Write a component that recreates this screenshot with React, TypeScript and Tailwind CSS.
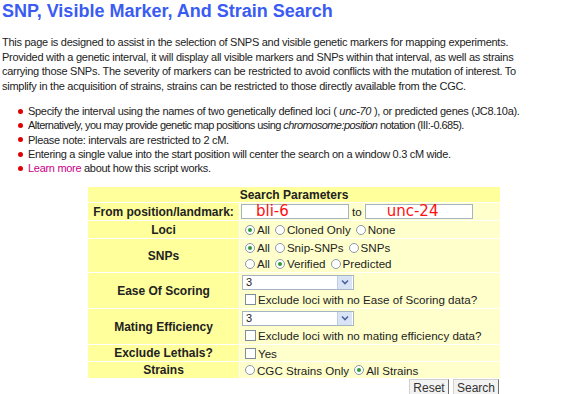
import React from "react";

function Radio({ checked, label }: { checked?: boolean; label: string }) {
  return (
    <span className="inline-flex items-center mr-[5px]">
      <span className="inline-flex items-center justify-center w-[10px] h-[10px] rounded-full border border-[#8a98a8] bg-white mr-[2px]">
        {checked && <span className="block w-[4px] h-[4px] rounded-full bg-[#2c9a3a]" />}
      </span>
      <span>{label}</span>
    </span>
  );
}

function Check({ label }: { label: string }) {
  return (
    <span className="inline-flex items-center">
      <span className="inline-block w-[11px] h-[11px] border border-[#7f8c99] bg-white mr-[2px]" />
      <span>{label}</span>
    </span>
  );
}

function Select() {
  return (
    <div className="flex items-center w-[112px] h-[15px] border border-[#a5b4c4] bg-white">
      <span className="flex-1 pl-[3px] text-[11px] leading-[13px]">3</span>
      <span className="flex items-center justify-center w-[15px] h-[13px] bg-[#d8e4f6] border-l border-[#c0cde0] mr-px">
        <svg width="8" height="6" viewBox="0 0 8 6">
          <path d="M1 1.5 L4 4.5 L7 1.5" fill="none" stroke="#4a64a0" strokeWidth="1.6" />
        </svg>
      </span>
    </div>
  );
}

function Label({ children, h }: { children: React.ReactNode; h: string }) {
  return (
    <div className={`flex items-center justify-center bg-[#ffff9c] font-bold text-[12px] whitespace-nowrap ${h}`}>
      {children}
    </div>
  );
}

const paraLines = [
  "This page is designed to assist in the selection of SNPS and visible genetic markers for mapping experiments.",
  "Provided with a genetic interval, it will display all visible markers and SNPs within that interval, as well as strains",
  "carrying those SNPs. The severity of markers can be restricted to avoid conflicts with the mutation of interest. To",
  "simplify in the acquisition of strains, strains can be restricted to those directly available from the CGC.",
];

const bullets: { c: React.ReactNode; t: string }[] = [
  { c: <>Specify the interval using the names of two genetically defined loci ( <i>unc-70</i> ), or predicted genes (JC8.10a).</>, t: "tracking-[-0.3px]" },
  { c: <>Alternatively, you may provide genetic map positions using <i>chromosome:position</i> notation (III:-0.685).</>, t: "tracking-[-0.55px]" },
  { c: <>Please note: intervals are restricted to 2 cM.</>, t: "tracking-[-0.3px]" },
  { c: <>Entering a single value into the start position will center the search on a window 0.3 cM wide.</>, t: "tracking-[-0.3px]" },
  { c: <><span className="text-[#cc0088]">Learn more</span> about how this script works.</>, t: "tracking-[-0.3px]" },
];

export default function App() {
  return (
    <div className="w-[580px] h-[394px] overflow-hidden bg-white text-[#222] font-['Liberation_Sans',Arial,sans-serif]">
      <h1 className="pl-[2px] text-[18px] leading-[22px] font-bold text-[#3a5cf2]">
        SNP, Visible Marker, And Strain Search
      </h1>
      <div className="mt-[13px] pl-[2px] text-[11px] leading-[14.5px] tracking-[-0.27px]">
        {paraLines.map((l, i) => (
          <div key={i} className="whitespace-nowrap">{l}</div>
        ))}
      </div>
      <ul className="mt-[11px] text-[11px] leading-[14.3px]">
        {bullets.map((b, i) => (
          <li key={i} className="flex items-center pl-[18px]">
            <span className="inline-block w-[5px] h-[5px] rounded-full bg-[#e00000] mr-[5px] shrink-0" />
            <span className={`whitespace-nowrap ${b.t}`}>{b.c}</span>
          </li>
        ))}
      </ul>

      <div className="mt-[12px] ml-[88px] w-[412px] grid grid-cols-[151px_260px] gap-px bg-white text-[11.6px]">
        <div className="col-span-2 h-[15px] flex items-center justify-center bg-[#ffff9c] font-bold text-[12px]">
          Search Parameters
        </div>

        <Label h="h-[17px]">From position/landmark:</Label>
        <div className="h-[17px] flex items-center bg-[#ffffcc] pl-[1px]">
          <div className="w-[108px] h-[15px] border border-[#a5b4c4] bg-white pl-[14px] text-[15px] leading-[13px] text-[#ff1010] font-['DejaVu_Sans',sans-serif]">
            bli-6
          </div>
          <span className="mx-[3px]">to</span>
          <div className="w-[108px] h-[15px] border border-[#a5b4c4] bg-white pl-[21px] text-[15px] leading-[13px] text-[#ff1010] font-['DejaVu_Sans',sans-serif]">
            unc-24
          </div>
        </div>

        <Label h="h-[17px]">Loci</Label>
        <div className="h-[17px] flex items-center bg-[#ffffcc] pl-[5px]">
          <Radio checked label="All" />
          <Radio label="Cloned Only" />
          <Radio label="None" />
        </div>

        <Label h="h-[33px]">SNPs</Label>
        <div className="h-[33px] flex flex-col justify-center bg-[#ffffcc] pl-[5px]">
          <div className="h-[16px] flex items-center">
            <Radio checked label="All" />
            <Radio label="Snip-SNPs" />
            <Radio label="SNPs" />
          </div>
          <div className="h-[16px] flex items-center">
            <Radio label="All" />
            <Radio checked label="Verified" />
            <Radio label="Predicted" />
          </div>
        </div>

        <Label h="h-[35px]">Ease Of Scoring</Label>
        <div className="h-[35px] flex flex-col justify-center bg-[#ffffcc] pl-[2px]">
          <div className="h-[17px] flex items-center">
            <Select />
          </div>
          <div className="h-[17px] flex items-center pl-[3px]">
            <Check label="Exclude loci with no Ease of Scoring data?" />
          </div>
        </div>

        <Label h="h-[35px]">Mating Efficiency</Label>
        <div className="h-[35px] flex flex-col justify-center bg-[#ffffcc] pl-[2px]">
          <div className="h-[17px] flex items-center">
            <Select />
          </div>
          <div className="h-[17px] flex items-center pl-[3px]">
            <Check label="Exclude loci with no mating efficiency data?" />
          </div>
        </div>

        <Label h="h-[16px]">Exclude Lethals?</Label>
        <div className="h-[16px] flex items-center bg-[#ffffcc] pl-[5px]">
          <Check label="Yes" />
        </div>

        <Label h="h-[16px]">Strains</Label>
        <div className="h-[16px] flex items-center bg-[#ffffcc] pl-[5px]">
          <Radio label="CGC Strains Only" />
          <Radio checked label="All Strains" />
        </div>
      </div>

      <div className="mt-[1px] w-[499px] flex justify-end gap-[4px] text-[12px]">
        <button className="h-[17px] w-[40px] flex items-center justify-center bg-[#f2f2f2] border border-[#d0d0d0] border-r-[#707070] border-b-[#707070] text-[#333]">
          Reset
        </button>
        <button className="h-[17px] w-[46px] flex items-center justify-center bg-[#f2f2f2] border border-[#d0d0d0] border-r-[#707070] border-b-[#707070] text-[#333]">
          Search
        </button>
      </div>
    </div>
  );
}
